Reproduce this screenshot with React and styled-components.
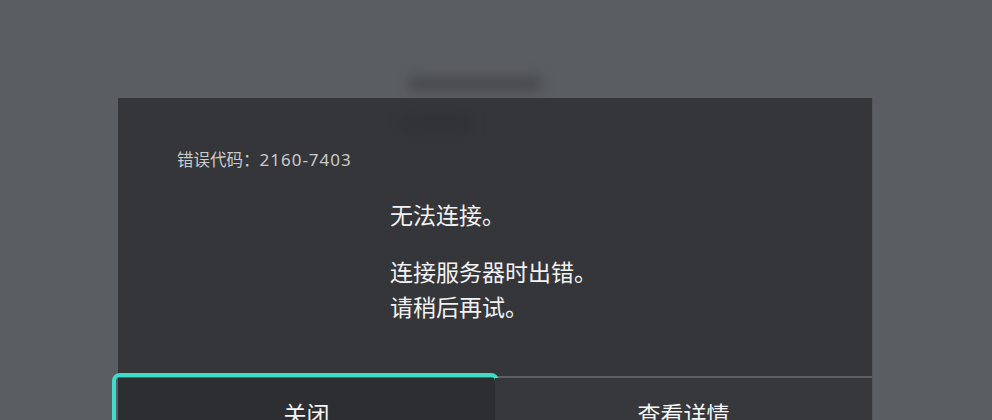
import React from "react";
import styled, { createGlobalStyle } from "styled-components";

const Global = createGlobalStyle`
  html, body { margin: 0; padding: 0; background: #5a5d62; }
  body {
    font-family: "Noto Sans", "Noto Sans CJK SC", sans-serif;
    overflow: hidden;
  }
`;

const Screen = styled.div`
  position: relative;
  width: 992px;
  height: 420px;
  background: #5a5d62;
  overflow: hidden;
`;

const BackdropText = styled.div`
  position: absolute;
  left: ${(p) => p.x}px;
  top: ${(p) => p.y}px;
  width: ${(p) => p.w}px;
  height: ${(p) => p.h}px;
  background: ${(p) => p.c};
  border-radius: 6px;
  filter: blur(6px);
`;

const Dialog = styled.div`
  position: absolute;
  left: 118px;
  top: 98px;
  width: 754px;
  background: rgba(52, 53, 56, 0.97);
  display: flex;
  flex-direction: column;
  box-shadow: 1px 0 0 rgba(80, 82, 88, 0.6);
`;

const Body = styled.div`
  padding: 49px 0 48px 59px;
  display: flex;
  flex-direction: column;
  height: 278px;
  box-sizing: border-box;
`;

const ErrorCode = styled.div`
  font-size: 16.5px;
  line-height: 25px;
  color: #cbcbcb;
`;

const Code = styled.span`
  font-size: 17px;
  letter-spacing: 1px;
`;

const Message = styled.div`
  margin: 26px 0 0 213px;
  display: flex;
  flex-direction: column;
  gap: 22px;
`;

const Para = styled.p`
  margin: 0;
  font-size: 23px;
  line-height: 35px;
  color: #f2f2f2;
`;

const Footer = styled.div`
  display: grid;
  grid-template-columns: 1fr 1fr;
  border-top: 2px solid #5d5e61;
  height: 70px;
`;

const Button = styled.div`
  position: relative;
  display: flex;
  align-items: center;
  justify-content: center;
  font-size: 23px;
  color: #f5f5f5;
  background: ${(p) => (p.$focused ? "#2d2e31" : "#37383b")};
  ${(p) =>
    p.$focused &&
    `
    &::after {
      content: "";
      position: absolute;
      left: -6px;
      right: -4px;
      top: -5px;
      bottom: -4px;
      border: 4px solid #40dcc9;
      border-radius: 8px;
    }
  `}
`;

export default function App() {
  return (
    <>
      <Global />
      <Screen>
        <BackdropText x={408} y={76} w={134} h={16} c="#494b50" />
        <Dialog>
          <BackdropText x={285} y={18} w={70} h={14} c="#303134" />
          <Body>
            <ErrorCode>
              错误代码：<Code>2160-7403</Code>
            </ErrorCode>
            <Message>
              <Para>无法连接。</Para>
              <Para>
                连接服务器时出错。
                <br />
                请稍后再试。
              </Para>
            </Message>
          </Body>
          <Footer>
            <Button $focused>关闭</Button>
            <Button>查看详情</Button>
          </Footer>
        </Dialog>
      </Screen>
    </>
  );
}
